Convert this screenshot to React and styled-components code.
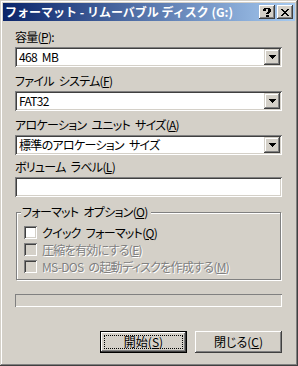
import React from "react";
import styled, { createGlobalStyle } from "styled-components";

const Global = createGlobalStyle`
  html, body { margin: 0; padding: 0; background: #d4d0c8; }
  * { box-sizing: border-box; }
`;

const FONT = `"Noto Sans CJK JP", "MS UI Gothic", sans-serif`;

const Window = styled.div`
  width: 298px;
  height: 366px;
  padding: 3px;
  background: #d4d0c8;
  box-shadow: inset -1px -1px #404040, inset 1px 1px #d4d0c8,
    inset -2px -2px #808080, inset 2px 2px #ffffff;
  font-family: ${FONT};
  font-size: 12px;
  color: #000;
  display: flex;
  flex-direction: column;
`;

const TitleBar = styled.div`
  height: 18px;
  display: flex;
  align-items: center;
  padding: 0 2px 0 2px;
  background: linear-gradient(to right, #0a246a, #a6caf0);
`;

const Title = styled.div`
  flex: 1;
  color: #fff;
  font-weight: bold;
  font-size: 12px;
  line-height: 14px;
  white-space: nowrap;
`;

const CapButton = styled.div`
  width: 16px;
  height: 14px;
  margin-left: ${(p) => p.$gap || 0}px;
  background: #d4d0c8;
  box-shadow: inset -1px -1px #404040, inset 1px 1px #fff,
    inset -2px -2px #808080, inset 2px 2px #d4d0c8;
  display: flex;
  align-items: center;
  justify-content: center;
`;

const Client = styled.div`
  flex: 1;
  display: flex;
  flex-direction: column;
  padding: 9px 13px 0 12px;
  font-feature-settings: "palt";
  letter-spacing: -0.7px;
  word-spacing: 3px;
`;

const Label = styled.div`
  line-height: 14px;
  height: 14px;
  white-space: nowrap;
  margin-bottom: 3px;
`;

const Field = styled.div`
  display: flex;
  flex-direction: column;
  margin-bottom: ${(p) => p.$mb}px;
`;

const Sunken = styled.div`
  height: 20px;
  background: #fff;
  box-shadow: inset 1px 1px #808080, inset -1px -1px #fff,
    inset 2px 2px #404040, inset -2px -2px #d4d0c8;
  padding: 2px;
  display: flex;
  align-items: center;
`;

const ComboText = styled.div`
  flex: 1;
  padding-left: 2px;
  line-height: 16px;
  white-space: nowrap;
`;

const DropBtn = styled.div`
  width: 16px;
  height: 16px;
  background: #d4d0c8;
  box-shadow: inset -1px -1px #404040, inset 1px 1px #d4d0c8,
    inset -2px -2px #808080, inset 2px 2px #fff;
  display: flex;
  align-items: center;
  justify-content: center;
`;

const Group = styled.div`
  position: relative;
  margin: 15px 1px 0 1px;
  height: 68px;
  border: 1px solid #808080;
  box-shadow: inset 1px 1px #fff, 1px 1px #fff;
  padding: 13px 0 0 7px;
  display: flex;
  flex-direction: column;
  gap: 4px;
`;

const Legend = styled.div`
  position: absolute;
  left: 4px;
  top: -8px;
  padding: 0 3px 0 1px;
  background: #d4d0c8;
  line-height: 14px;
  white-space: nowrap;
`;

const CheckRow = styled.div`
  display: flex;
  align-items: center;
  height: 13px;
  gap: 5px;
  color: ${(p) => (p.$disabled ? "#808080" : "#000")};
  text-shadow: ${(p) => (p.$disabled ? "1px 1px #fff" : "none")};
  white-space: nowrap;
  line-height: 13px;
`;

const Box = styled.div`
  width: 13px;
  height: 13px;
  flex: none;
  background: ${(p) => (p.$disabled ? "#d4d0c8" : "#fff")};
  box-shadow: inset 1px 1px #808080, inset -1px -1px #fff,
    inset 2px 2px #404040, inset -2px -2px #d4d0c8;
`;

const Progress = styled.div`
  margin-top: 14px;
  height: 13px;
  box-shadow: inset 1px 1px #808080, inset -1px -1px #fff;
`;

const ButtonRow = styled.div`
  margin-top: 24px;
  display: flex;
  justify-content: flex-end;
  gap: 8px;
`;

const Button = styled.div`
  position: relative;
  width: 87px;
  height: 22px;
  background: #d4d0c8;
  border: ${(p) => (p.$default ? "1px solid #000" : "none")};
  box-shadow: inset -1px -1px #404040, inset 1px 1px #fff,
    inset -2px -2px #808080, inset 2px 2px #d4d0c8;
  display: flex;
  align-items: center;
  justify-content: center;
  line-height: 14px;
  white-space: nowrap;
  letter-spacing: 0;
`;

const Focus = styled.div`
  position: absolute;
  left: 3px;
  top: 3px;
  right: 3px;
  bottom: 3px;
  border: 1px dotted #000;
`;

const Arrow = () => (
  <svg width="7" height="4" viewBox="0 0 7 4" shapeRendering="crispEdges">
    <path d="M0 0h7v1H0zM1 1h5v1H1zM2 2h3v1H2zM3 3h1v1H3z" fill="#000" />
  </svg>
);

const Combo = ({ value }) => (
  <Sunken>
    <ComboText>{value}</ComboText>
    <DropBtn>
      <Arrow />
    </DropBtn>
  </Sunken>
);

export default function App() {
  return (
    <>
      <Global />
      <Window>
        <TitleBar>
          <Title>フォーマット - リムーバブル ディスク (G:)</Title>
          <CapButton>
            <svg width="8" height="9" viewBox="0 0 8 9" shapeRendering="crispEdges">
              <path
                d="M1 0h6v1H1zM0 1h3v2H0zM5 1h3v3H5zM4 4h3v1H4zM3 5h3v1H3zM3 7h3v2H3z"
                fill="#000"
              />
            </svg>
          </CapButton>
          <CapButton $gap={2}>
            <svg width="8" height="7" viewBox="0 0 8 7" shapeRendering="crispEdges">
              <path
                d="M0 0h2v1H0zM6 0h2v1H6zM1 1h2v1H1zM5 1h2v1H5zM2 2h4v1H2zM3 3h2v1H3zM2 4h4v1H2zM1 5h2v1H1zM5 5h2v1H5zM0 6h2v1H0zM6 6h2v1H6z"
                fill="#000"
              />
            </svg>
          </CapButton>
        </TitleBar>
        <Client>
          <Field $mb={7}>
            <Label>
              容量(<u>P</u>):
            </Label>
            <Combo value="468 MB" />
          </Field>
          <Field $mb={7}>
            <Label>
              ファイル システム(<u>F</u>)
            </Label>
            <Combo value="FAT32" />
          </Field>
          <Field $mb={5}>
            <Label>
              アロケーション ユニット サイズ(<u>A</u>)
            </Label>
            <Combo value="標準のアロケーション サイズ" />
          </Field>
          <Field $mb={0}>
            <Label>
              ボリューム ラベル(<u>L</u>)
            </Label>
            <Sunken />
          </Field>
          <Group>
            <Legend>
              フォーマット オプション(<u>O</u>)
            </Legend>
            <CheckRow>
              <Box />
              <span>
                クイック フォーマット(<u>Q</u>)
              </span>
            </CheckRow>
            <CheckRow $disabled>
              <Box $disabled />
              <span>
                圧縮を有効にする(<u>E</u>)
              </span>
            </CheckRow>
            <CheckRow $disabled>
              <Box $disabled />
              <span>
                MS-DOS の起動ディスクを作成する(<u>M</u>)
              </span>
            </CheckRow>
          </Group>
          <Progress />
          <ButtonRow>
            <Button $default>
              <Focus />
              開始(<u>S</u>)
            </Button>
            <Button>
              閉じる(<u>C</u>)
            </Button>
          </ButtonRow>
        </Client>
      </Window>
    </>
  );
}
